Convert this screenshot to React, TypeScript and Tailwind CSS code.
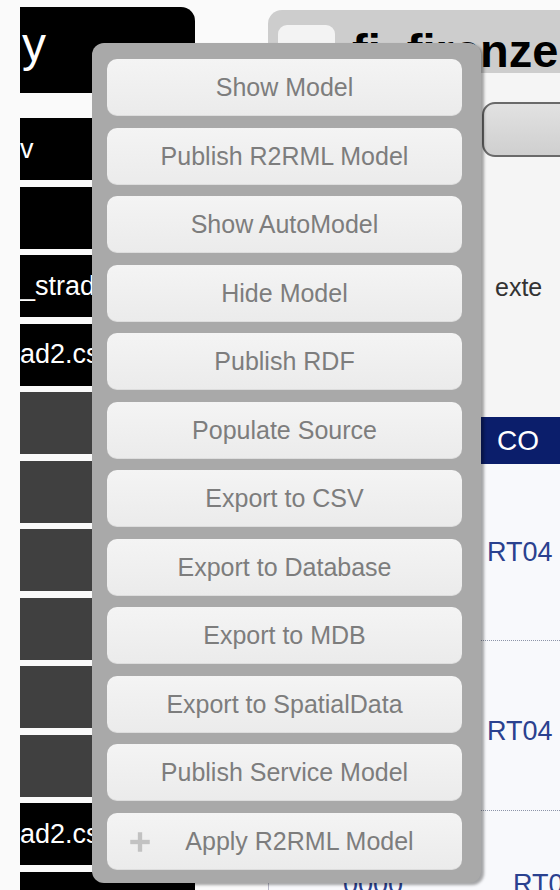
import { Plus } from 'lucide-react'

// dark rows of the source list; labels are the tails left visible by the narrow column
const sidebarRows = [
    { label: 'v', tone: 'black' },
    { label: '', tone: 'black' },
    { label: '_strada', tone: 'black' },
    { label: 'ad2.csv', tone: 'black' },
    { label: '', tone: 'gray' },
    { label: '', tone: 'gray' },
    { label: '', tone: 'gray' },
    { label: '', tone: 'gray' },
    { label: '', tone: 'gray' },
    { label: '', tone: 'gray' },
    { label: 'ad2.csv', tone: 'black' },
    { label: '', tone: 'black' },
]

const menuItems = [
    'Show Model',
    'Publish R2RML Model',
    'Show AutoModel',
    'Hide Model',
    'Publish RDF',
    'Populate Source',
    'Export to CSV',
    'Export to Database',
    'Export to MDB',
    'Export to SpatialData',
    'Publish Service Model',
]

function Sidebar() {
    return (
        <aside className="w-[175px] shrink-0 flex flex-col">
            <div className="h-[86px] bg-black rounded-tr-[14px] overflow-hidden flex items-center">
                <span className="ml-[2px] text-[48px] text-white leading-none pb-[10px]">y</span>
            </div>
            <div className="mt-[25px] flex flex-col gap-[6.5px]">
                {sidebarRows.map((row, i) => (
                    <div
                        key={i}
                        className={`h-[62px] overflow-hidden flex items-center ${row.tone === 'black' ? 'bg-black' : 'bg-[#404040]'}`}
                    >
                        {row.label && (
                            <span className="whitespace-nowrap text-[27px] text-white leading-none">{row.label}</span>
                        )}
                    </div>
                ))}
            </div>
        </aside>
    )
}

function SourcePanel() {
    return (
        <section className="flex-1 min-w-0 pt-[3px] flex flex-col">
            <div className="h-[63px] bg-[#cdcdcd] rounded-tl-[14px] flex items-start pl-[10px] pt-[15px] gap-[17px] overflow-hidden">
                <div className="w-[57px] h-[40px] bg-[#f3f3f3] rounded-[9px] shrink-0" />
                <h1 className="text-[47px] font-bold text-black leading-none whitespace-nowrap mt-[2px]">fi_firenze</h1>
            </div>
            <div className="bg-[#f5f5f5] flex flex-col">
                <div className="pl-[214px] pt-[29px]">
                    <button className="w-[110px] h-[55px] rounded-[13px] border-2 border-[#6a6a6a] bg-gradient-to-b from-[#e2e2e2] to-[#cfcfcf]" />
                </div>
                <p className="pl-[227px] pt-[113px] text-[25px] text-[#333] leading-none whitespace-nowrap">exte</p>
                <div className="mt-[117px] h-[47px] bg-[#0b1e6b] flex items-center pl-[229px]">
                    <span className="text-[28px] text-white leading-none">CO</span>
                </div>
                <div className="bg-[#f8f9fc] border-l border-[#b8b8c8]">
                    <div className="h-[177px] border-b border-dotted border-[#8c94a8] flex items-center pl-[218px]">
                        <span className="text-[27px] text-[#2a418f] leading-none">RT04</span>
                    </div>
                    <div className="h-[170px] border-b border-dotted border-[#8c94a8] flex items-center pl-[218px] pt-[12px]">
                        <span className="text-[27px] text-[#2a418f] leading-none">RT04</span>
                    </div>
                    <div className="h-[80px] flex items-start pt-[60px]">
                        <span className="ml-[74px] text-[27px] text-[#2a418f] leading-none">0000</span>
                        <span className="ml-[110px] text-[27px] text-[#2a418f] leading-none">RT0</span>
                    </div>
                </div>
            </div>
        </section>
    )
}

function ModelMenu() {
    return (
        <div className="absolute left-[92px] top-[43px] w-[389px] h-[840px] bg-[#a9a9a9] rounded-[12px] shadow-[3px_2px_3px_rgba(0,0,0,0.35)] pl-[15px] pr-[19px] pt-[16px] flex flex-col gap-[11.5px]">
            {menuItems.map(item => (
                <button
                    key={item}
                    className="h-[57px] shrink-0 rounded-[10px] bg-gradient-to-b from-[#f4f4f4] to-[#ebebeb] shadow-[inset_0_-1px_0_rgba(0,0,0,0.06)] text-[25px] text-[#7d7d7d] leading-none"
                >
                    {item}
                </button>
            ))}
            <button className="relative h-[57px] shrink-0 rounded-[10px] bg-gradient-to-b from-[#f4f4f4] to-[#ebebeb] shadow-[inset_0_-1px_0_rgba(0,0,0,0.06)] text-[25px] text-[#7d7d7d] leading-none pl-[30px]">
                <Plus className="absolute left-[20px] top-[16px] w-[26px] h-[26px] text-[#c2c2c2]" strokeWidth={4} strokeLinecap="square" />
                Apply R2RML Model
            </button>
        </div>
    )
}

export default function App() {
    return (
        <div className="relative w-[560px] h-[890px] overflow-hidden bg-[#fafafa] font-['Liberation_Sans',Arial,sans-serif]">
            <div className="flex pl-[20px] pt-[7px] gap-[73px]">
                <Sidebar />
                <SourcePanel />
            </div>
            <ModelMenu />
        </div>
    )
}
